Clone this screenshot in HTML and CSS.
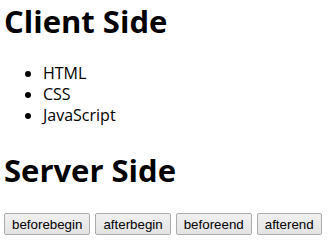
FILE: index.html
```html
<!DOCTYPE html>
<html lang="ko">
<head>
  <meta charset="UTF-8">
  <meta name="viewport" content="width=device-width, initial-scale=1.0">
  <title>insertAdjacentHTML</title>
  <link rel="stylesheet" href="styles.css">
</head>
<body>
  <h1>Client Side</h1>
  <ul>
    <li>HTML</li>
    <li>CSS</li>
    <li>JavaScript</li>
  </ul>

  <h1>Server Side</h1>

  <div class="actions">
    <button>beforebegin</button>
    <button>afterbegin</button>
    <button>beforeend</button>
    <button>afterend</button>
  </div>
</body>
</html>
```
FILE: styles.css
```css
body {
  font-family: 'Open Sans', 'Noto Sans CJK KR', sans-serif;
  margin: 0;
  padding: 1px 4px 0;
  color: #000;
  background: #fff;
}

h1 {
  font-size: 31px;
  font-weight: bold;
  line-height: 40px;
  margin: 0;
}

ul {
  margin: 22px 0 24px;
  padding-left: 39px;
  font-size: 16px;
  line-height: 21px;
}

.actions {
  display: flex;
  gap: 5px;
  margin-top: 23px;
}

button {
  font-family: 'Liberation Sans', Arial, sans-serif;
  font-size: 13.33px;
  color: #000;
  height: 22px;
  padding: 0 7px;
  border: 1px solid #acacac;
  border-radius: 2px;
  background: linear-gradient(#f0f0f0, #e3e3e3);
}
```
